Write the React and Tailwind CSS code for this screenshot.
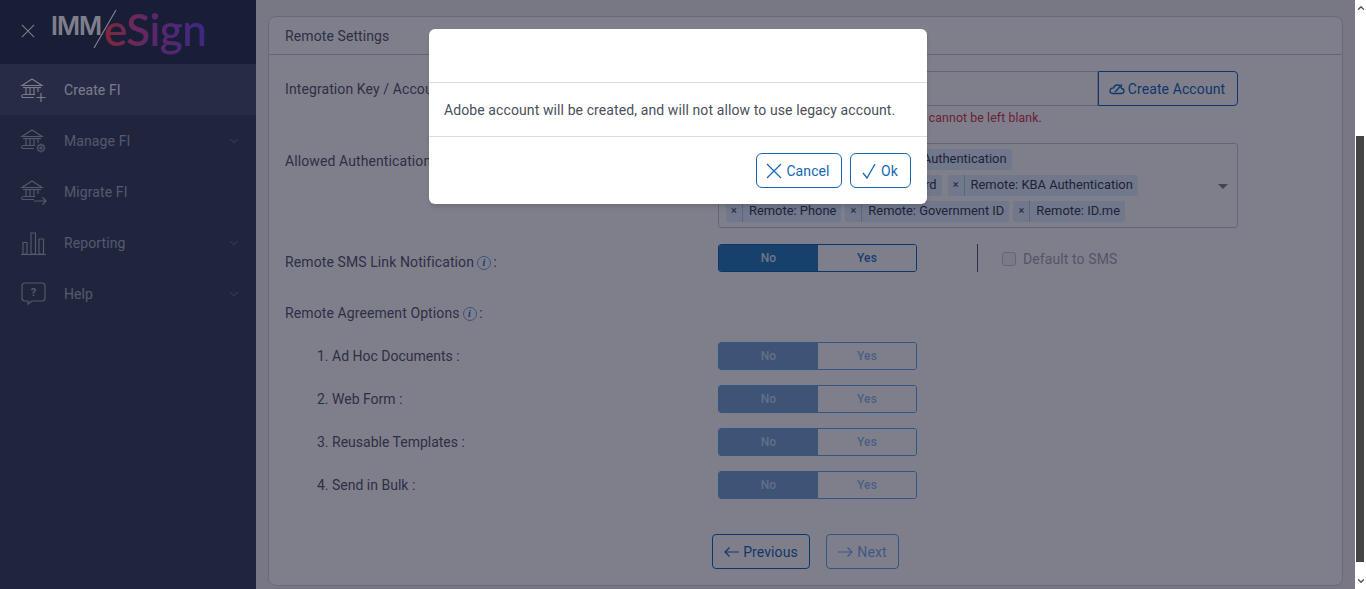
import React from 'react';
import { ChevronDown, ChevronUp } from 'lucide-react';

// Bank building shared by the first three menu icons
const Bank = () => (
  <>
    <path d="M2 9.5 L12 3 L22 9.5 Z" />
    <path d="M3 11.5 H21" />
    <path d="M6 12 V18 M10 12 V18 M14 12 V18 M18 12 V16" />
    <path d="M3 18.5 H15 M2 21.5 H14 M2 21.5 V18.5" />
  </>
);

const CreateIcon = () => (
  <svg width="28" height="28" viewBox="0 0 28 28" fill="none" stroke="currentColor" strokeWidth="1.15">
    <Bank />
    <path d="M21 17 V26 M16.5 21.5 H25.5" strokeWidth="1.2" />
  </svg>
);

const ManageIcon = () => (
  <svg width="28" height="28" viewBox="0 0 28 28" fill="none" stroke="currentColor" strokeWidth="1.15">
    <Bank />
    <circle cx="21" cy="21" r="3.2" />
    <circle cx="21" cy="21" r="1" />
    <path d="M21 16.5 V17.8 M21 24.2 V25.5 M16.5 21 H17.8 M24.2 21 H25.5 M17.8 17.8 L18.7 18.7 M23.3 23.3 L24.2 24.2 M24.2 17.8 L23.3 18.7 M18.7 23.3 L17.8 24.2" />
  </svg>
);

const MigrateIcon = () => (
  <svg width="28" height="28" viewBox="0 0 28 28" fill="none" stroke="currentColor" strokeWidth="1.15">
    <Bank />
    <path d="M14 23 H26 M22.5 19.5 L26 23 L22.5 26.5" strokeWidth="1.2" />
  </svg>
);

const ReportIcon = () => (
  <svg width="28" height="28" viewBox="0 0 28 28" fill="none" stroke="currentColor" strokeWidth="1.15">
    <path d="M3 13.5 H7 V25 H3 Z M11 4 H15.5 V25 H11 Z M19 10 H23.5 V25 H19 Z" />
    <path d="M1 25.5 H26" />
  </svg>
);

const HelpIcon = () => (
  <svg width="28" height="28" viewBox="0 0 28 28" fill="none" stroke="currentColor" strokeWidth="1.15">
    <path d="M5 3 H22 Q25 3 25 6 V18 Q25 21 22 21 H12 L8 24 V21 H5 Q2 21 2 18 V6 Q2 3 5 3 Z" />
    <text x="13.5" y="15.5" textAnchor="middle" fontSize="11" fontWeight="700" fill="currentColor" stroke="none" fontFamily="Roboto, sans-serif">?</text>
  </svg>
);

const CloudIcon = () => (
  <svg width="16" height="16" viewBox="0 0 16 16" fill="none" stroke="currentColor" strokeWidth="1.3">
    <path d="M4 12.5 H12 Q15 12.5 15 10 Q15 7.8 12.5 7.5 Q12 4 8.5 4 Q5.5 4 4.7 6.8 Q1 7 1 10 Q1 12.5 4 12.5 Z" />
    <path d="M6 11 L13 3.5" />
  </svg>
);

const CrossIcon = ({ size = 16 }) => (
  <svg width={size} height={size} viewBox="0 0 16 16" fill="none" stroke="currentColor" strokeWidth="1.2">
    <path d="M1 1 L15 15 M15 1 L1 15" />
  </svg>
);

const TickIcon = () => (
  <svg width="16" height="16" viewBox="0 0 16 16" fill="none" stroke="currentColor" strokeWidth="1.3">
    <path d="M2 10 L6 15 L14 1" />
  </svg>
);

const LongArrow = ({ left }) => (
  <svg width="15" height="12" viewBox="0 0 15 12" fill="none" stroke="currentColor" strokeWidth="1.2">
    <path d={left ? 'M1 6 H15 M5.5 1.5 L1 6 L5.5 10.5' : 'M0 6 H14 M9.5 1.5 L14 6 L9.5 10.5'} />
  </svg>
);

const InfoIcon = () => (
  <span className="relative -top-[1px] ml-[3px] -mr-[1px] inline-flex h-[14px] w-[14px] items-center justify-center rounded-full border border-[#7ea6d4] font-['Liberation_Serif',serif] text-[10px] font-bold italic leading-none text-[#2c74b8]">
    i
  </span>
);

const menu = [
  { label: 'Create FI', icon: CreateIcon, active: true },
  { label: 'Manage FI', icon: ManageIcon, more: true },
  { label: 'Migrate FI', icon: MigrateIcon },
  { label: 'Reporting', icon: ReportIcon, more: true },
  { label: 'Help', icon: HelpIcon, more: true },
];

const Sidebar = () => (
  <aside className="h-full w-[256px] shrink-0 bg-[#404a62]">
    <div className="flex h-[64px] items-center bg-[#323c54] pl-[21px]">
      <span className="-mt-[2px] text-white">
        <CrossIcon size={14} />
      </span>
      <div className="relative ml-[16px] flex h-[64px] items-start">
        <span className="mt-[11px] font-['Inter',sans-serif] text-[25px] font-semibold leading-[30px] tracking-[-1px] text-white">IMM</span>
        <svg width="24" height="40" viewBox="0 0 24 40" className="absolute left-[42px] top-[9px]" fill="none" stroke="#ffffff" strokeWidth="1.2">
          <path d="M23 1 L1 39" />
        </svg>
        <span className="mt-[3px] ml-[3px] bg-gradient-to-r from-[#ff4c58] via-[#b84cc0] to-[#7850ea] bg-clip-text pb-[8px] font-['Lato',sans-serif] text-[44px] font-semibold leading-[52px] tracking-[-0.6px] text-transparent">
          eSign
        </span>
      </div>
    </div>
    <nav>
      {menu.map((item) => (
        <div
          key={item.label}
          className={`flex h-[51px] items-center pl-[20px] pr-[15px] text-[14px] ${item.active ? 'bg-[#4c5872] text-[#f6f6fa]' : 'text-[#aab0c0]'}`}
        >
          <item.icon />
          <span className="ml-[16px] flex-1 pt-[2px]">{item.label}</span>
          {item.more && <ChevronDown size={14} strokeWidth={1} />}
        </div>
      ))}
    </nav>
  </aside>
);

const Toggle = ({ muted }) => (
  <div className={`flex h-[28px] w-[199px] overflow-hidden rounded-[3px] border text-[12px] font-medium ${muted ? 'border-[#64aaea]' : 'border-[#146ec2]'}`}>
    <div className={`flex w-[99px] items-center justify-center ${muted ? 'bg-[#7ca8d2] text-[#c8dcf4]' : 'bg-[#3080be] text-[#dce8f4]'}`}>No</div>
    <div className={`flex flex-1 items-center justify-center bg-white ${muted ? 'text-[#96beea]' : 'text-[#3878c2]'}`}>Yes</div>
  </div>
);

const Tag = ({ children }) => (
  <span className="flex h-[21px] items-center rounded-[2px] bg-[#e2f0fe] text-[12.9px] tracking-normal text-[#3e4656]">
    <span className="flex h-full w-[17px] items-center justify-center border-r border-[#b7cde6] text-[11px]">×</span>
    <span className="pb-[1px] pl-[6px] pr-[5px]">{children}</span>
  </span>
);

const agreementOptions = ['1. Ad Hoc Documents :', '2. Web Form :', '3. Reusable Templates :', '4. Send in Bulk :'];

const Form = () => (
  <div className="px-[16px]">
    <div className="flex pt-[16px]">
      <label className="w-[433px] pt-[8px] text-[14px] text-[#5c6070]">Integration Key / Account ID :</label>
      <div className="flex-1">
        <div className="flex h-[35px] w-[520px]">
          <input className="h-full flex-1 border border-[#c8cad2] bg-white" />
          <button className="flex w-[140px] items-center justify-center gap-[3px] rounded-r-[4px] border border-[#146ec2] pr-[2px] text-[14px] text-[#1e6eb8]">
            <CloudIcon /> <span className="pt-[1px]">Create Account</span>
          </button>
        </div>
        <p className="mt-[3px] h-[18px] text-[12.3px] text-[#d8404f]">Adobe Sign Integration Key / Account cannot be left blank.</p>
      </div>
    </div>

    <div className="mt-[16px] flex">
      <label className="w-[433px] pt-[8px] text-[14px] text-[#5c6070]">Allowed Authentication Methods :</label>
      <div className="relative flex h-[85px] w-[520px] flex-col gap-[5px] rounded-[3px] border border-[#c8cad2] bg-white py-[5px] pl-[7px]">
        <div className="flex gap-[5px]">
          <Tag>Remote: Adobe Sign Pass-key Authentication</Tag>
        </div>
        <div className="flex gap-[6px]">
          <Tag>Remote: Adobe Signer Password</Tag>
          <Tag>Remote: KBA Authentication</Tag>
        </div>
        <div className="flex gap-[4px]">
          <Tag>Remote: Phone</Tag>
          <Tag>Remote: Government ID</Tag>
          <Tag>Remote: ID.me</Tag>
        </div>
        <span className="absolute right-[9px] top-[40px] h-0 w-0 border-x-[5px] border-t-[5px] border-x-transparent border-t-[#888888]" />
      </div>
    </div>

    <div className="mt-[16px] flex">
      <label className="w-[433px] pt-[8px] text-[14px] text-[#5c6070]">
        Remote SMS Link Notification<InfoIcon /> :
      </label>
      <Toggle />
      <div className="ml-[60px] h-[28px] border-l border-[#5c6070]" />
      <label className="ml-[24px] flex items-center gap-[7px] pt-[1px] text-[14px] text-[#a8abb5]">
        <span className="h-[14px] w-[14px] rounded-[3px] border border-[#c8cad2] bg-[#f6f6f6]" />
        Default to SMS
      </label>
    </div>

    <div className="mt-[31px] text-[14px] leading-[18px] text-[#5c6070]">
      Remote Agreement Options<InfoIcon /> :
    </div>

    <div className="mt-[20px] flex flex-col gap-[15px]">
      {agreementOptions.map((opt) => (
        <div key={opt} className="flex">
          <label className="w-[433px] pl-[32px] pt-[4px] text-[14px] tracking-normal text-[#5c6070]">{opt}</label>
          <Toggle muted />
        </div>
      ))}
    </div>

    <div className="mt-[35px] flex gap-[16px] pl-[427px] text-[14px]">
      <button className="flex h-[35px] w-[98px] items-center justify-center gap-[4px] rounded-[4px] border border-[#146ec2] text-[#1e6eb8]">
        <LongArrow left /> <span className="pt-[2px]">Previous</span>
      </button>
      <button className="flex h-[35px] w-[73px] items-center justify-center gap-[4px] rounded-[4px] border border-[#64aaea] text-[#7ab4ea]">
        <LongArrow /> <span className="pt-[2px]">Next</span>
      </button>
    </div>
  </div>
);

const Modal = () => (
  <div className="absolute left-[429px] top-[29px] w-[498px] rounded-[6px] bg-white text-[14px] text-[#4a4f5c] shadow-md">
    <div className="h-[54px] border-b border-[#dcdde4]" />
    <div className="flex h-[54px] items-center border-b border-[#dcdde4] pl-[15px] pt-[2px]">
      Adobe account will be created, and will not allow to use legacy account.
    </div>
    <div className="flex h-[67px] items-center justify-end gap-[8px] pr-[16px] text-[#1368b3]">
      <button className="flex h-[35px] w-[86px] items-center justify-center gap-[4px] rounded-[6px] border border-[#1368b3] pr-[2px]">
        <CrossIcon /> <span className="pt-[1px]">Cancel</span>
      </button>
      <button className="flex h-[35px] w-[61px] items-center justify-center gap-[4px] rounded-[6px] border border-[#1368b3] pr-[2px]">
        <TickIcon /> <span className="pt-[1px]">Ok</span>
      </button>
    </div>
  </div>
);

export default function App() {
  return (
    <div className="flex h-[589px] overflow-hidden bg-white font-['Roboto',sans-serif] tracking-[0.1px]">
      <div className="relative flex h-full w-[1355px] shrink-0">
        <Sidebar />
        <main className="h-full flex-1 bg-[#f0f0f0] px-[12px] pt-[16px]">
          <div className="h-[570px] rounded-[8px] border border-[#d2d3da] bg-white">
            <div className="flex h-[38px] items-center border-b border-[#c8cad2] pl-[16px] pt-[2px] text-[14px] text-[#5c6070]">
              Remote Settings
            </div>
            <Form />
          </div>
        </main>
        {/* dim layer over the whole page while the dialog is open */}
        <div className="absolute inset-0 bg-[#00001a]/50" />
        <Modal />
      </div>
      <div className="flex h-full flex-1 flex-col items-center justify-between bg-white py-[3px] text-[#505050]">
        <ChevronUp size={10} strokeWidth={3} />
        <div className="absolute right-[2px] top-[136px] h-[426px] w-[8px] bg-[#444444]" />
        <ChevronDown size={10} strokeWidth={3} />
      </div>
    </div>
  );
}
